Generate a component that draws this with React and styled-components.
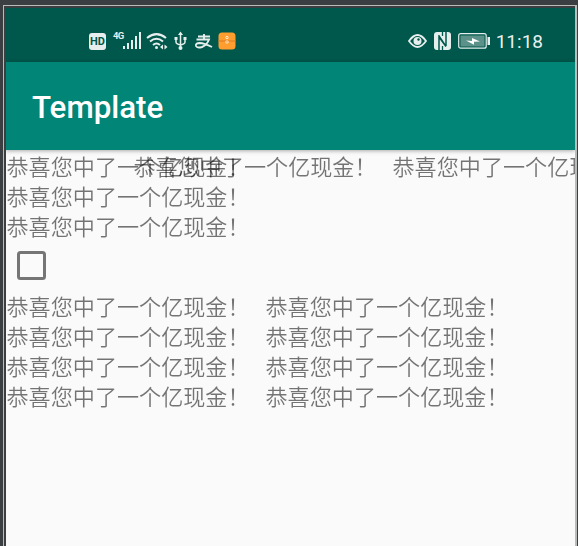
import React from 'react';
import styled, { createGlobalStyle } from 'styled-components';

const MESSAGE = '恭喜您中了一个亿现金！';

const GlobalStyle = createGlobalStyle`
  * { box-sizing: border-box; }
  body { margin: 0; background: #3c3f41; overflow: hidden; }
`;

const Frame = styled.div`
  width: 574px;
  height: 541px;
  margin: 5px 0 0 3px;
  padding: 2px 0 0 2px;
  border: solid #bbbcb9;
  border-width: 1px 2px 0 1px;
  background: #3c3f41;
`;

const Screen = styled.div`
  height: 100%;
  display: flex;
  flex-direction: column;
  background: #fafafa;
  overflow: hidden;
`;

const StatusBar = styled.header`
  flex: none;
  height: 54px;
  display: flex;
  justify-content: space-between;
  padding: 22px 32px 0 83px;
  background: #00574b;
  color: #e6efed;
`;

const StatusGroup = styled.div`
  display: flex;
  align-items: center;
  height: 22px;
  gap: ${({ $gap }) => $gap}px;
`;

const Icon = styled.svg`
  display: block;
  flex: none;
  overflow: visible;
`;

const Badge = styled.span`
  width: 17px;
  height: 17px;
  border-radius: 3px;
  background: #e6efed;
  color: #00574b;
  font: 700 11px/17px Roboto, sans-serif;
  text-align: center;
`;

const Signal = styled.div`
  display: flex;
  height: 20px;
  margin-left: 1px;
`;

const Network = styled.span`
  width: 10px;
  font: 700 9.5px/10px Roboto, sans-serif;
  letter-spacing: -0.7px;
`;

const Clock = styled.time`
  position: relative;
  top: 1px;
  margin-left: -1px;
  font: 400 19px/22px Roboto, sans-serif;
`;

const AppBar = styled.div`
  flex: none;
  position: relative;
  height: 88px;
  padding: 3px 26px 0;
  display: flex;
  align-items: center;
  background: #008577;
  box-shadow: 0 1px 4px rgba(0, 0, 0, 0.32);
`;

const Title = styled.h1`
  margin: 0;
  color: #fff;
  font: 500 31.3px/40px Roboto, sans-serif;
`;

const Content = styled.main`
  position: relative;
  will-change: transform;
`;

const Message = styled.span`
  display: block;
  flex: none;
  height: 30px;
  padding-left: 0.5px;
  width: 259px;
  color: rgba(0, 0, 0, 0.54);
  font: 350 22.1px/30px "Noto Sans CJK SC DemiLight", "Noto Sans CJK SC", sans-serif;
  white-space: nowrap;
`;

const Marquee = styled.div`
  position: absolute;
  top: 0;
  left: 127px;
  display: flex;
`;

const CheckRow = styled.div`
  height: 50px;
  padding: 11px 0 0 11px;
`;

const Checkbox = styled.div`
  width: 29px;
  height: 29px;
  border: 3px solid #757575;
  border-radius: 3.5px;
`;

const Columns = styled.div`
  display: grid;
  grid-template-columns: 259px 259px;
  grid-auto-rows: 30px;
`;

export default function App() {
  return (
    <>
      <GlobalStyle />
      <Frame>
        <Screen>
          <StatusBar>
            <StatusGroup $gap={6}>
              <Badge>HD</Badge>
              <Signal>
                <Network>4G</Network>
                <Icon width="18" height="20" viewBox="0 0 18 20" fill="currentColor">
                  <path d="M0 15h2v3H0zM4 12h2v6H4zM8 9h2v9H8zM12 5h2v13h-2zM16 1h2v17h-2z" />
                </Icon>
              </Signal>
              <Icon width="20" height="20" viewBox="1 0 20 20" fill="none" stroke="currentColor" strokeWidth="2">
                <path d="M1 7Q10.500-.8 20 7M4 10.500Q10.500 5 17 10.500M7 14Q10.500 11 14 14" />
                <circle cx="10.500" cy="16.500" r="1.500" fill="currentColor" stroke="none" />
                <path d="M17 13.500l-3 2.500 3 2.500zM18.500 13.500l3 2.500-3 2.500z" fill="currentColor" stroke="none" />
              </Icon>
              <Icon width="15" height="20" viewBox="-1 0 15 20" fill="none" stroke="currentColor" strokeWidth="1.500">
                <path d="M6.500 3v14M2 7v4q0 2 4.500 3 4.500-1 4.500-3V7" />
                <path d="M4 4L6.500 .5 9 4zM.5 6h3v3h-3zM9.500 6h3v3h-3z" fill="currentColor" stroke="none" />
                <circle cx="6.500" cy="17" r="2" fill="currentColor" stroke="none" />
              </Icon>
              <Icon width="18" height="18" viewBox="-1 0 18 18" fill="none" stroke="currentColor" strokeWidth="1.900">
                <path d="M3 4.500h12M9 2v5.500M1.500 7.500h12.500Q12 13 7 15 2 16.500 1 14 .5 11 4.500 11q5 .2 12.500 4" />
              </Icon>
              <Icon width="18" height="18" viewBox="0 0 18 18">
                <rect x=".5" y=".5" width="17" height="17" rx="3.500" fill="#ff9d2e" />
                <path d="M.5 9h17" stroke="#d97d22" />
                <g fill="none" stroke="#fff0d9"><circle cx="9" cy="5.500" r="1.200" /><path d="M9 8.500l1.500 1.500L9 11.500 7.500 10z" /></g>
              </Icon>
            </StatusGroup>
            <StatusGroup $gap={7}>
              <Icon width="19" height="16" viewBox="0 0 19 16" fill="none" stroke="currentColor" strokeWidth="1.800">
                <path d="M1 8Q9.500-4 18 8 9.500 20 1 8z" />
                <circle cx="9.500" cy="8" r="4" fill="currentColor" stroke="none" />
                <circle cx="10.500" cy="6.500" r="1.200" fill="#00574b" stroke="none" />
              </Icon>
              <Icon width="17" height="18" viewBox="0 0 17 18" fill="none">
                <rect width="17" height="18" rx="3" fill="#e6efed" />
                <path d="M5 18V5l7 9.500M5 3.500V3M5 4l7 10.500M12 0v14" stroke="#00574b" strokeWidth="1.500" />
                <path d="M8.500 0v4M8.500 14v4" stroke="#00574b" strokeWidth="1.300" />
              </Icon>
              <Icon width="32" height="16" viewBox="0 0 32 16">
                <rect x=".7" y=".7" width="27.500" height="14.500" rx="2" fill="none" stroke="#e6efed" strokeWidth="1.200" />
                <rect x="2.500" y="2.500" width="24" height="11" fill="#5b9188" />
                <path d="M8 7.500l6 .5V5l8 3.500-6 .2v3z" fill="#fff" />
                <path d="M29.500 4H32v8h-2.500z" fill="#e6efed" />
              </Icon>
              <Clock>11:18</Clock>
            </StatusGroup>
          </StatusBar>
          <AppBar>
            <Title>Template</Title>
          </AppBar>
          <Content>
            <Message>{MESSAGE}</Message>
            <Marquee>
              <Message>{MESSAGE}</Message>
              <Message>{MESSAGE}</Message>
            </Marquee>
            <Message>{MESSAGE}</Message>
            <Message>{MESSAGE}</Message>
            <CheckRow>
              <Checkbox role="checkbox" aria-checked="false" />
            </CheckRow>
            <Columns>
              {Array.from({ length: 8 }, (_, i) => (
                <Message key={i}>{MESSAGE}</Message>
              ))}
            </Columns>
          </Content>
        </Screen>
      </Frame>
    </>
  );
}
